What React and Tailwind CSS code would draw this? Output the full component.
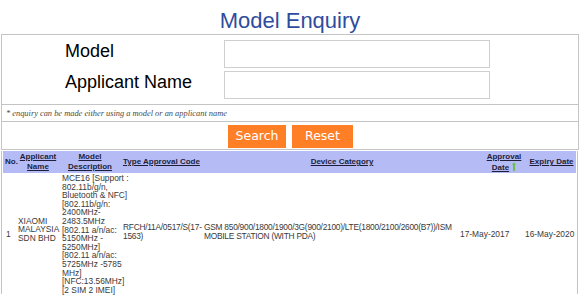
const ArrowUp = () => (
  <svg width="4" height="9" viewBox="0 0 4 9" className="inline-block ml-[3px] align-[-1px]">
    <path d="M2 0 L4 3 L3 3 L3 9 L1 9 L1 3 L0 3 Z" fill="#6cbf4a" />
  </svg>
);

const modelLines = [
  "MCE16 [Support :",
  "802.11b/g/n,",
  "Bluetooth & NFC]",
  "[802.11b/g/n:",
  "2400MHz-",
  "2483.5MHz",
  "[802.11 a/n/ac:",
  "5150MHz -",
  "5250MHz]",
  "[802.11 a/n/ac:",
  "5725MHz -5785",
  "MHz]",
  "[NFC:13.56MHz]",
  "[2 SIM 2 IMEI]",
];

export default function App() {
  return (
    <div className="w-[580px] h-[296px] overflow-hidden bg-white font-['Liberation_Sans',Arial,sans-serif]">
      {/* Title */}
      <h1 className="h-[34px] pt-[8px] text-center text-[22px] leading-[26px] text-[#2f4c9e]">
        Model Enquiry
      </h1>

      {/* Search box */}
      <div className="ml-[1px] w-[578px] border border-[#c4c4c4]">
        <div className="pt-[5px] pb-[5px] flex flex-col gap-[3px]">
          <div className="flex items-start">
            <label className="w-[222px] pl-[63px] text-[18px] leading-[22px] text-black">Model</label>
            <input className="w-[266px] h-[28px] border border-[#cfcfcf] outline-none" />
          </div>
          <div className="flex items-start">
            <label className="w-[222px] pl-[63px] text-[18px] leading-[22px] text-black">Applicant Name</label>
            <input className="w-[266px] h-[28px] border border-[#cfcfcf] outline-none" />
          </div>
        </div>
        <div className="border-t border-[#c4c4c4] h-[17px] pl-[4px] pt-[3px] font-['Liberation_Serif',serif] italic text-[8.4px] leading-[11px] text-[#4a4a4a]">
          * enquiry can be made either using a model or an applicant name
        </div>
        <div className="border-t border-[#c4c4c4] h-[28px] flex justify-center items-start pt-[3px] gap-[6px] pl-[1px]">
          <button className="w-[58px] h-[23px] bg-[#ff7f27] text-white text-[12.5px] font-['DejaVu_Sans',Verdana,sans-serif]">
            Search
          </button>
          <button className="w-[61px] h-[23px] bg-[#ff7f27] text-white text-[12.5px] font-['DejaVu_Sans',Verdana,sans-serif]">
            Reset
          </button>
        </div>
      </div>

      {/* Results */}
      <div className="ml-[1px] w-[577px] mt-[1px] border-l border-r border-[#c4c4c4] px-[1px]">
        {/* Header row */}
        <div className="grid grid-cols-[14px_42px_62px_82px_278px_46px_1fr] items-center h-[22px] bg-[#b5bcf5] text-[8px] leading-[10px] font-bold text-[#1e1e3a]">
          <div className="pl-[2px]">No.</div>
          <div className="text-center underline">Applicant<br />Name</div>
          <div className="text-center underline">Model<br />Description</div>
          <div className="pl-[2px] underline">Type Approval Code</div>
          <div className="text-center underline">Device Category</div>
          <div className="text-center underline">
            Approval<br />Date<ArrowUp />
          </div>
          <div className="text-center underline">Expiry Date</div>
        </div>

        {/* Data row */}
        <div className="grid grid-cols-[14px_43px_62px_80px_255px_66px_1fr] items-center text-[8.4px] leading-[8.6px] text-[#3a3a3a]">
          <div className="pl-[3px] mt-[2px]">1</div>
          <div className="pl-[1px] mb-[8px]">XIAOMI<br />MALAYSIA<br />SDN BHD</div>
          <div className="pl-[2px] pt-[1px] whitespace-nowrap">
            {modelLines.map((l, i) => (
              <div key={i}>{l}</div>
            ))}
          </div>
          <div className="pl-[1px] mb-[4px] whitespace-nowrap tracking-[-0.26px]">RFCH/11A/0517/S(17-<br />1563)</div>
          <div className="pl-[2px] mb-[4px] whitespace-nowrap tracking-[-0.26px]">
            GSM 850/900/1800/1900/3G(900/2100)/LTE(1800/2100/2600(B7))/ISM<br />MOBILE STATION (WITH PDA)
          </div>
          <div className="pl-[3px] mt-[2px] whitespace-nowrap">17-May-2017</div>
          <div className="pl-[2px] mt-[2px] whitespace-nowrap">16-May-2020</div>
        </div>
      </div>
    </div>
  );
}
